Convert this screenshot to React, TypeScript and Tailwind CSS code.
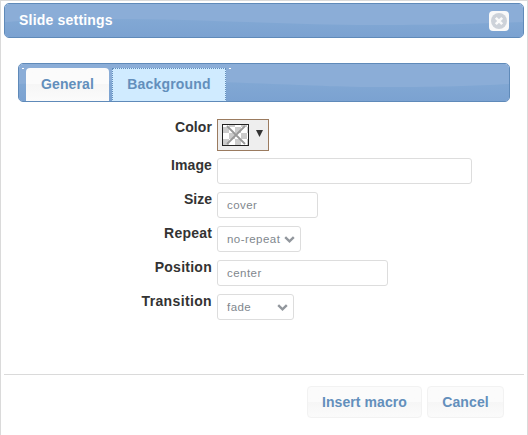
import React from "react";

function Wave({ d, height }: { d: string; height: number }) {
  return (
    <svg className="pointer-events-none absolute inset-0 h-full w-full" viewBox={`0 0 520 ${height}`} preserveAspectRatio="none" aria-hidden="true">
      <defs>
        <linearGradient id={`lower${height}`} x1="0" y1="0" x2="0" y2="1">
          <stop offset="0" stopColor="#82a8d4" />
          <stop offset="1" stopColor="#7ba2d1" />
        </linearGradient>
      </defs>
      <rect width="520" height={height} fill="#8badd7" />
      <path d={d} fill={`url(#lower${height})`} />
    </svg>
  );
}

function FormRow({ label, className, labelClass, children }: { label: string; className: string; labelClass: string; children: React.ReactNode }) {
  return (
    <div className={`flex items-start gap-[5px] ${className}`}>
      <div className={`w-[194px] text-right font-bold leading-4 ${labelClass}`}>{label}</div>
      {children}
    </div>
  );
}

const field =
  "flex h-[26px] items-center rounded-[3px] border border-[#dddddd] bg-white pl-[9px] pt-px text-[11.5px] tracking-[0.45px] text-[#7f878e]";

const button =
  "h-8 rounded-[4px] border border-[#f2f2f2] bg-gradient-to-b from-[#fbfbfb] from-50% via-[#f6f6f6] via-50% to-[#fbfbfb]";

function Chevron() {
  return (
    <svg width="11" height="8" viewBox="0 0 11 8" fill="none" aria-hidden="true">
      <path d="M1.2 1.2 5.5 5.4 9.8 1.2" stroke="#92979d" strokeWidth="2.4" />
    </svg>
  );
}

export default function App() {
  return (
    <div className="relative h-[435px] w-[528px] overflow-hidden border-x border-t border-[#dadada] bg-white px-[3px] pt-[2px] font-['Liberation_Sans',Arial,sans-serif] text-[14px] text-[#333333]">
      <span className="absolute -left-px -top-px h-[2px] w-px bg-[#777777]" />
      <span className="absolute -right-px -top-px h-[2px] w-px bg-[#777777]" />
      <span className="absolute -left-px bottom-0 h-px w-px bg-[#777777]" />
      <span className="absolute -right-px bottom-0 h-px w-px bg-[#777777]" />
      <header className="relative flex h-[35px] items-center justify-between overflow-hidden rounded-[5px] border border-[#5f8ab9] px-[14px]">
        <Wave height={33} d="M0 18 C40 15 110 14 180 16 S310 21 370 21 S470 20 520 18 V33 H0Z" />
        <h1 className="relative mb-px font-bold leading-4 tracking-[0.2px] text-white">Slide settings</h1>
        <button className="relative flex h-5 w-5 items-center justify-center rounded-[4px] bg-[#f9f9f9]" aria-label="Close">
          <svg width="16" height="16" viewBox="0 0 16 16" aria-hidden="true">
            <circle cx="8" cy="8" r="8" fill="#cdd2d9" />
            <path d="M4.8 4.8 11.2 11.2M11.2 4.8 4.8 11.2" stroke="#fafafa" strokeWidth="2.6" />
          </svg>
        </button>
      </header>

      <nav className="relative ml-[14px] mt-[25px] flex h-[39px] w-[492px] items-start overflow-hidden rounded-[5px] border border-[#5f8ab9] pl-[7px] pt-[4px] font-bold text-[#638fbc]">
        <Wave height={37} d="M0 20 C40 17 130 16 210 18 S330 23 390 23 S480 22 520 20 V37 H0Z" />
        <span className="absolute left-[3px] top-[4px] h-px w-[2px] bg-white" />
        <span className="absolute left-[210px] top-[4px] h-px w-[2px] bg-white" />
        <button className="relative h-[33px] w-[83px] rounded-t-[4px] bg-gradient-to-b from-[#fbfbfb] from-50% via-[#f6f6f6] via-50% to-[#fbfbfb] pb-px tracking-[0.13px]">General</button>
        <button className="relative ml-[3px] h-[34px] w-[114px] border border-dotted border-[#638fbc] bg-[#d0ebff] pb-[2px] tracking-[0.18px]">Background</button>
      </nav>

      <form className="flex h-[272px] flex-col pl-[14px] pt-[17px]">
        <FormRow label="Color" className="h-[39px]" labelClass="tracking-[0.1px]">
          <div className="flex h-8 w-[52px] items-center border border-[#9b7b5f] bg-[#eeeeee] pl-1">
            <svg width="27" height="22" viewBox="0 0 27 22" aria-hidden="true">
              <rect width="27" height="22" fill="#fff" />
              <path d="M7 1h6v2H7zM19 1h6v2h-6zM1 3h6v6H1zM13 3h6v6h-6zM25 3h1v6h-1zM7 9h6v6H7zM19 9h6v6h-6zM1 15h6v6H1zM13 15h6v6h-6zM25 15h1v6h-1z" fill="#cccccc" />
              <path d="M5 2 23 20M23 2 5 20" stroke="#999999" strokeWidth="1.8" />
              <rect x=".5" y=".5" width="26" height="21" fill="none" stroke="#222222" />
            </svg>
            <svg className="mb-[4px] ml-[7px]" width="7" height="7" viewBox="0 0 7 7" aria-hidden="true">
              <path d="M0 0H7L3.5 7Z" fill="#333333" />
            </svg>
          </div>
        </FormRow>
        <FormRow label="Image" className="h-[34px]" labelClass="-mt-px tracking-[0.1px]"><div className={`${field} w-[255px]`} /></FormRow>
        <FormRow label="Size" className="h-[34px]" labelClass="-mt-px"><div className={`${field} w-[101px]`}>cover</div></FormRow>
        <FormRow label="Repeat" className="h-[34px]" labelClass="-mt-px tracking-[0.2px]">
          <div className={`${field} w-[84px] justify-between pr-[5px]`}>no-repeat<Chevron /></div>
        </FormRow>
        <FormRow label="Position" className="h-[34px]" labelClass="-mt-px tracking-[0.26px]"><div className={`${field} w-[171px]`}>center</div></FormRow>
        <FormRow label="Transition" className="h-[34px]" labelClass="-mt-px tracking-[0.36px]">
          <div className={`${field} w-[77px] justify-between pr-[5px]`}>fade<Chevron /></div>
        </FormRow>
      </form>

      <footer className="flex justify-end gap-[5px] border-t border-[#dadada] pr-5 pt-[11px] font-bold text-[#638fbc]">
        <button className={`${button} w-[115px] tracking-[0.08px]`}>Insert macro</button>
        <button className={`${button} w-[77px] tracking-[0.13px]`}>Cancel</button>
      </footer>
    </div>
  );
}
